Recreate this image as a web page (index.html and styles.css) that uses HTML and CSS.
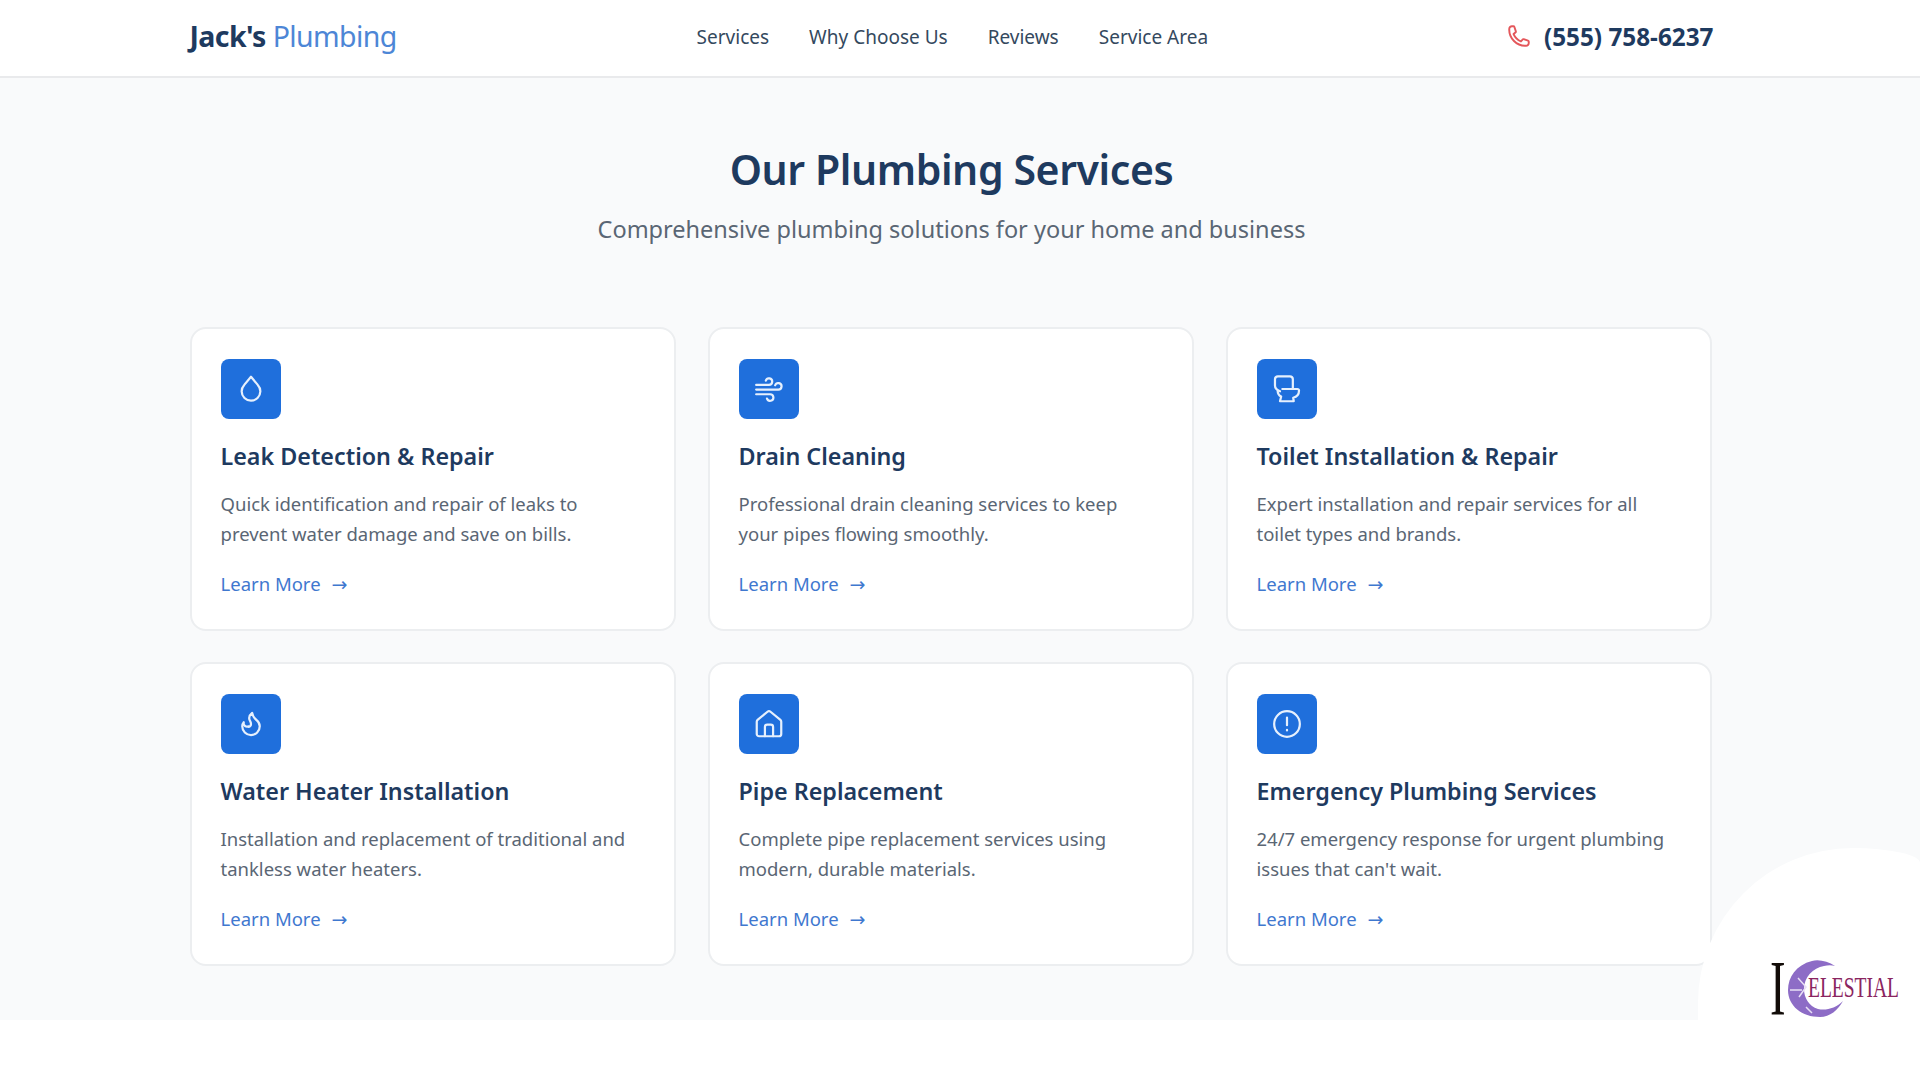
FILE: index.html
```html
<!DOCTYPE html>
<html lang="en">
<head>
<meta charset="utf-8">
<title>Jack's Plumbing</title>
<link rel="stylesheet" href="styles.css">
</head>
<body>
<header class="site-header">
  <div class="container header-row">
    <a class="brand"><strong>Jack's</strong> <span>Plumbing</span></a>
    <nav class="nav">
      <a>Services</a><a>Why Choose Us</a><a>Reviews</a><a>Service Area</a>
    </nav>
    <a class="phone">
      <svg class="phone-icon" viewBox="0 0 24 24" fill="none" stroke="#e4575b" stroke-width="1.8" stroke-linecap="round" stroke-linejoin="round"><path d="M3 5.500A2.500 2.500 0 0 1 5.500 3h1.300a1 1 0 0 1 .95.68l1.300 3.900a1 1 0 0 1-.4 1.150L7 10.200a13 13 0 0 0 6.800 6.800l1.470-1.650a1 1 0 0 1 1.150-.4l3.900 1.300a1 1 0 0 1 .68.95v1.300a2.500 2.500 0 0 1-2.500 2.500h-1C9.800 21 3 14.200 3 6.500z"/></svg>
      <span>(555) 758-6237</span>
    </a>
  </div>
</header>
<main class="services">
  <div class="container">
    <h2 class="heading">Our Plumbing Services</h2>
    <p class="subheading">Comprehensive plumbing solutions for your home and business</p>
    <div class="grid">
      <article class="card">
        <div class="icon"><svg viewBox="0 0 24 24"><path d="M12 1.500 L17.800 8.500 A8 8 0 1 1 6.200 8.500 Z"/></svg></div>
        <h3>Leak Detection &amp; Repair</h3>
        <p>Quick identification and repair of leaks to prevent water damage and save on bills.</p>
        <a class="more">Learn More <i>→</i></a>
      </article>
      <article class="card">
        <div class="icon"><svg viewBox="0 0 24 24"><path d="M1 8.500h11a2.800 2.800 0 1 0-2.700-3.700M1 12.500h19a2.800 2.800 0 1 0-2.700-3.700M1 16.500h12a2.800 2.800 0 1 1-2.700 3.700"/></svg></div>
        <h3>Drain Cleaning</h3>
        <p>Professional drain cleaning services to keep your pipes flowing smoothly.</p>
        <a class="more">Learn More <i>→</i></a>
      </article>
      <article class="card">
        <div class="icon"><svg viewBox="0 0 24 24"><path d="M6 14C3.500 13 1.700 11 1.700 9V3.500A2.500 2.500 0 0 1 4.200 1.200H14.500A2.500 2.500 0 0 1 17 3.500V11.500"/><path d="M8 12H21a1.300 1.300 0 0 1 1.300 1.300c0 3-2 5.500-5 6.200l.5 3H6l1-4c-2-1-3-3-3-5"/></svg></div>
        <h3>Toilet Installation &amp; Repair</h3>
        <p>Expert installation and repair services for all toilet types and brands.</p>
        <a class="more">Learn More <i>→</i></a>
      </article>
      <article class="card">
        <div class="icon"><svg viewBox="0 0 24 24"><path d="M10 14.500A2.500 2.500 0 0 0 12 12c0-1.400-.5-2-1-3-1-2-.5-4.500 2-6.500.4 2.500 2 4.700 3.800 6.200 1.800 1.500 2.700 3.500 2.700 5.300a7.500 7.500 0 1 1-15 0c0-1.200.5-2.500 1.300-3.500a3 3 0 0 0 4.200 3.500z"/></svg></div>
        <h3>Water Heater Installation</h3>
        <p>Installation and replacement of traditional and tankless water heaters.</p>
        <a class="more">Learn More <i>→</i></a>
      </article>
      <article class="card">
        <div class="icon"><svg viewBox="0 0 24 24"><path d="M15.500 22.500v-8a2 2 0 0 0-2-2h-3a2 2 0 0 0-2 2v8"/><path d="M1.500 10a2 2 0 0 1 .7-1.500l8.500-7a2 2 0 0 1 2.600 0l8.500 7a2 2 0 0 1 .7 1.500v10.500a2 2 0 0 1-2 2H3.500a2 2 0 0 1-2-2z"/></svg></div>
        <h3>Pipe Replacement</h3>
        <p>Complete pipe replacement services using modern, durable materials.</p>
        <a class="more">Learn More <i>→</i></a>
      </article>
      <article class="card">
        <div class="icon"><svg viewBox="0 0 24 24"><circle cx="12" cy="12" r="11"/><path d="M12 6.500v6.500M12 17v.5"/></svg></div>
        <h3>Emergency Plumbing Services</h3>
        <p>24/7 emergency response for urgent plumbing issues that can't wait.</p>
        <a class="more">Learn More <i>→</i></a>
      </article>
    </div>
  </div>
</main>
<aside class="watermark">
  <span class="wm-i">I</span>
  <svg class="wm-moon" viewBox="0 0 57 57"><path d="M47 6C40 1 30-1 24 1 8 5 0 17 0 30c0 16 14 27 32 27 10 0 18-7 23-16-7 7-17 10-25 8-9-3-14-11-14-20 0-12 9-21 20-23 4-1 8-1 11 0z" fill="#8d6cc6"/><path d="M10 18l8 9-7 10M2 30h12M18 47l6 6" fill="none" stroke="#e8dff5" stroke-width="1.500"/></svg>
  <span class="wm-text">ELESTIAL</span>
</aside>
</body>
</html>
```
FILE: styles.css
```css
* { box-sizing: border-box; }
html, body { margin: 0; padding: 0; }
body {
  position: relative;
  height: 1080px;
  overflow: hidden;
  padding-right: 17px;
  background: #fff;
  font-family: "Noto Sans", "Open Sans", sans-serif;
  color: #1e3a5f;
}
.container { width: 1522px; margin: 0 auto; }
.site-header {
  height: 78px;
  margin-right: -17px;
  padding-right: 17px;
  background: #fff;
  border-bottom: 2px solid #e9eaec;
}
.header-row {
  width: 1524px;
  height: 76px;
  padding-bottom: 4px;
  display: flex;
  align-items: center;
  justify-content: space-between;
}
.brand { font-size: 28.500px; letter-spacing: -0.6px; color: #1e3a5f; }
.brand strong { font-weight: 700; }
.brand span { color: #4d86d6; font-weight: 400; }
.nav { display: flex; gap: 40px; padding-top: 2px; font-size: 19px; color: #34495e; margin-left: 2px; }
.phone { display: flex; align-items: center; gap: 12px; font-size: 24.300px; font-weight: 700; color: #1e3a5f; }
.phone-icon { width: 26px; height: 26px; }
.services {
  height: 942px;
  margin-right: -17px;
  padding-right: 17px;
  background: #f9fafb;
  padding-top: 64px;
}
.heading {
  margin: 0;
  text-align: center;
  font-size: 41px;
  line-height: 54px;
  font-weight: 600;
  color: #1e3a5f;
  letter-spacing: -0.4px;
}
.subheading {
  margin: 15px 0 0;
  text-align: center;
  font-size: 23.500px;
  line-height: 36px;
  color: #5a6674;
}
.grid {
  margin: 80px 1px 0 -1px;
  display: grid;
  grid-template-columns: repeat(3, 1fr);
  gap: 31px 32px;
}
.card {
  height: 304px;
  padding: 30px 29px 0;
  background: #fff;
  border: 2px solid #eceef0;
  border-radius: 16px;
}
.icon {
  width: 60px;
  height: 60px;
  border-radius: 8px;
  background: #1f6fdc;
  display: flex;
  align-items: center;
  justify-content: center;
}
.icon svg {
  width: 28px;
  height: 28px;
  fill: none;
  stroke: #e6f0fd;
  stroke-width: 1.900;
  stroke-linecap: round;
  stroke-linejoin: round;
  overflow: visible;
}
.card h3 {
  margin: 19px 0 0;
  font-size: 23.300px;
  line-height: 36px;
  font-weight: 600;
  color: #1e3a5f;
}
.card p {
  margin: 15px 0 0;
  max-width: 415px;
  font-size: 18.500px;
  line-height: 30px;
  color: #5a6674;
}
.more {
  display: block;
  margin-top: 20px;
  font-size: 18.500px;
  line-height: 30px;
  color: #3f78cf;
}
.more i {
  font-family: "DejaVu Sans", sans-serif;
  font-style: normal;
  font-size: 19px;
  margin-left: 6px;
}
.watermark {
  position: absolute;
  right: 0;
  bottom: 0;
  width: 222px;
  height: 232px;
  background: #fff;
  border-top-left-radius: 155px;
  border-top-right-radius: 67px 15px;
}
.wm-i {
  position: absolute;
  left: 72px;
  top: 101px;
  font-family: "Liberation Serif", serif;
  font-size: 78px;
  line-height: 78px;
  color: #120c08;
  transform: scaleX(.6);
  transform-origin: left center;
}
.wm-moon { position: absolute; left: 90px; top: 112px; width: 57px; height: 57px; }
.wm-text {
  position: absolute;
  left: 110px;
  top: 122px;
  font-family: "Liberation Serif", serif;
  font-size: 30px;
  line-height: 34px;
  color: #8a2560;
  transform: scaleX(.65);
  transform-origin: left center;
}
```
